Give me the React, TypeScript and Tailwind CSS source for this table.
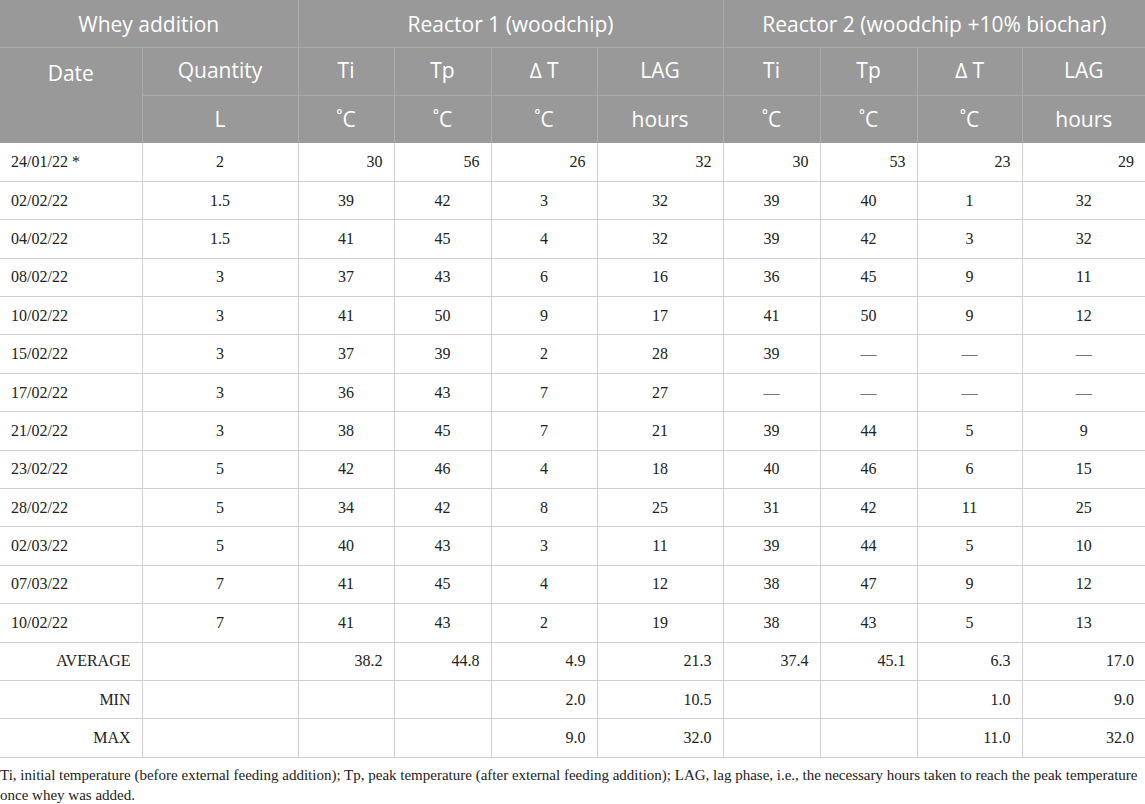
import React from 'react';

const rows: string[][] = [
  ['24/01/22 *', '2', '30', '56', '26', '32', '30', '53', '23', '29'],
  ['02/02/22', '1.5', '39', '42', '3', '32', '39', '40', '1', '32'],
  ['04/02/22', '1.5', '41', '45', '4', '32', '39', '42', '3', '32'],
  ['08/02/22', '3', '37', '43', '6', '16', '36', '45', '9', '11'],
  ['10/02/22', '3', '41', '50', '9', '17', '41', '50', '9', '12'],
  ['15/02/22', '3', '37', '39', '2', '28', '39', '—', '—', '—'],
  ['17/02/22', '3', '36', '43', '7', '27', '—', '—', '—', '—'],
  ['21/02/22', '3', '38', '45', '7', '21', '39', '44', '5', '9'],
  ['23/02/22', '5', '42', '46', '4', '18', '40', '46', '6', '15'],
  ['28/02/22', '5', '34', '42', '8', '25', '31', '42', '11', '25'],
  ['02/03/22', '5', '40', '43', '3', '11', '39', '44', '5', '10'],
  ['07/03/22', '7', '41', '45', '4', '12', '38', '47', '9', '12'],
  ['10/02/22', '7', '41', '43', '2', '19', '38', '43', '5', '13'],
];

const stats: string[][] = [
  ['AVERAGE', '', '38.2', '44.8', '4.9', '21.3', '37.4', '45.1', '6.3', '17.0'],
  ['MIN', '', '', '', '2.0', '10.5', '', '', '1.0', '9.0'],
  ['MAX', '', '', '', '9.0', '32.0', '', '', '11.0', '32.0'],
];

const widths = [142, 156, 96, 97, 106, 126, 97, 97, 105, 123];

const App: React.FC = () => {
  const cellBase = 'border-b border-r border-[#cfcfcf] px-[11px] h-[38.4px] align-middle';

  return (
    <div className="w-[1145px] bg-white text-[#222] font-['Liberation_Serif',serif]">
      <table className="w-full table-fixed border-collapse">
        <colgroup>
          {widths.map((w, i) => (
            <col key={i} style={{ width: w }} />
          ))}
        </colgroup>
        <thead className="bg-[#999999] text-white font-['Open_Sans',sans-serif] text-[21px] font-normal">
          <tr className="h-[47px]">
            <th colSpan={2} className="border-b border-r border-[#ababab] font-normal pt-[3px]">Whey addition</th>
            <th colSpan={4} className="border-b border-r border-[#ababab] font-normal pt-[3px]">Reactor 1 (woodchip)</th>
            <th colSpan={4} className="border-b border-[#ababab] font-normal pt-[3px]">Reactor 2 (woodchip +10% biochar)</th>
          </tr>
          <tr className="h-[48px]">
            <th rowSpan={2} className="border-r border-[#ababab] font-normal align-top pt-[10px]">Date</th>
            <th className="border-b border-r border-[#ababab] font-normal">Quantity</th>
            <th className="border-b border-r border-[#ababab] font-normal">Ti</th>
            <th className="border-b border-r border-[#ababab] font-normal">Tp</th>
            <th className="border-b border-r border-[#ababab] font-normal">∆ T</th>
            <th className="border-b border-r border-[#ababab] font-normal">LAG</th>
            <th className="border-b border-r border-[#ababab] font-normal">Ti</th>
            <th className="border-b border-r border-[#ababab] font-normal">Tp</th>
            <th className="border-b border-r border-[#ababab] font-normal">∆ T</th>
            <th className="border-b border-[#ababab] font-normal">LAG</th>
          </tr>
          <tr className="h-[48px]">
            <th className="border-r border-[#ababab] font-normal">L</th>
            <th className="border-r border-[#ababab] font-normal">˚C</th>
            <th className="border-r border-[#ababab] font-normal">˚C</th>
            <th className="border-r border-[#ababab] font-normal">˚C</th>
            <th className="border-r border-[#ababab] font-normal">hours</th>
            <th className="border-r border-[#ababab] font-normal">˚C</th>
            <th className="border-r border-[#ababab] font-normal">˚C</th>
            <th className="border-r border-[#ababab] font-normal">˚C</th>
            <th className="font-normal">hours</th>
          </tr>
        </thead>
        <tbody className="text-[16px]">
          {rows.map((r, ri) => (
            <tr key={ri}>
              {r.map((v, ci) => {
                const align =
                  ci === 0 ? 'text-left' : ci === 1 ? 'text-center' : ri === 0 ? 'text-right' : 'text-center';
                const last = ci === r.length - 1 ? 'border-r-0' : '';
                const dash = v === '—' ? 'text-[#777]' : '';
                return (
                  <td key={ci} className={`${cellBase} ${align} ${last} ${dash}`}>
                    {v}
                  </td>
                );
              })}
            </tr>
          ))}
          {stats.map((r, ri) => (
            <tr key={'s' + ri}>
              {r.map((v, ci) => (
                <td
                  key={ci}
                  className={`${cellBase} text-right ${ci === r.length - 1 ? 'border-r-0' : ''}`}
                >
                  {v}
                </td>
              ))}
            </tr>
          ))}
        </tbody>
      </table>
      <p className="text-[15px] leading-[20px] pt-[7px]">
        Ti, initial temperature (before external feeding addition); Tp, peak temperature (after external feeding
        addition); LAG, lag phase, i.e., the necessary hours taken to reach the peak temperature once whey was added.
      </p>
    </div>
  );
};

export default App;
